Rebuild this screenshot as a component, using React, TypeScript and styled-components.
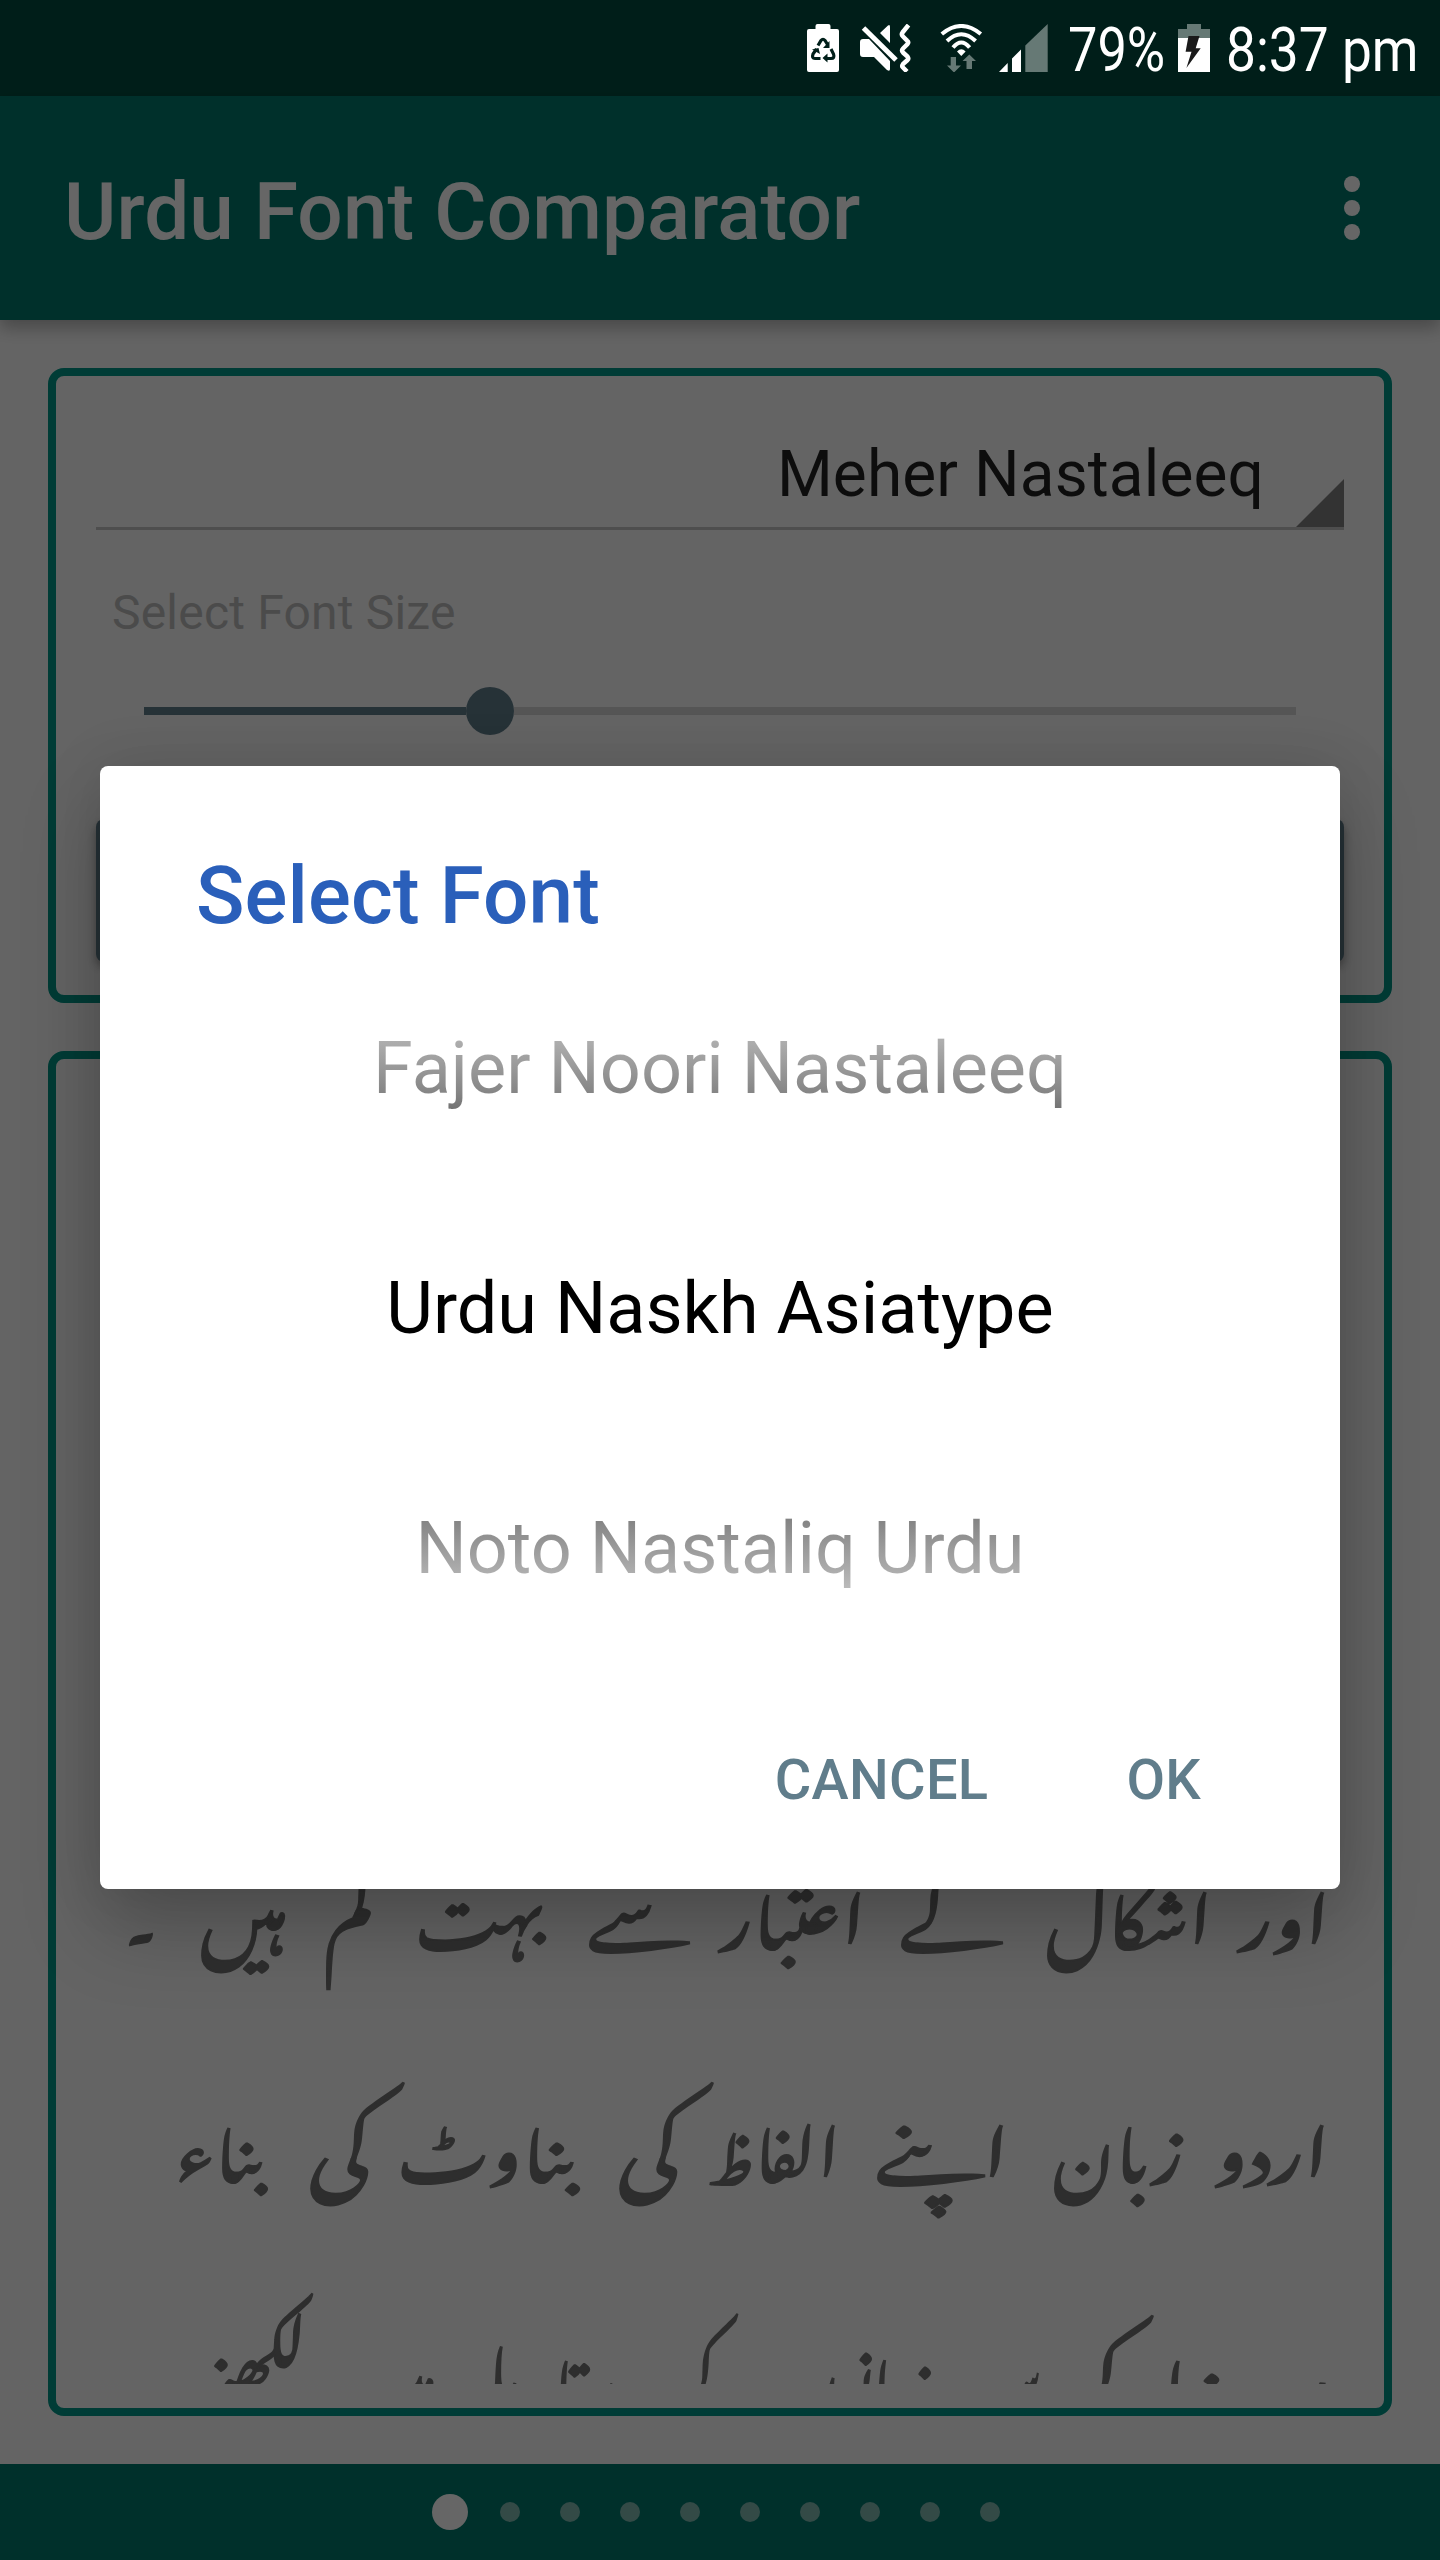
import React, { useLayoutEffect, useRef, useState } from "react";
import styled, { createGlobalStyle } from "styled-components";

const GlobalStyle = createGlobalStyle`
  * { box-sizing: border-box; }
  body { margin: 0; background: #fafafa; font-family: Roboto, "Liberation Sans", sans-serif; }
  button { font-family: inherit; border: 0; background: none; padding: 0; }
  svg { display: block; flex: none; }
`;

const Screen = styled.div`
  position: relative;
  width: 1440px;
  height: 2560px;
  overflow: hidden;
`;

const Page = styled.div`
  display: flex;
  flex-direction: column;
  height: 100%;
  background: #fafafa;
`;

const StatusBackdrop = styled.div`
  flex: none;
  height: 96px;
  background: #004d40;
`;

const AppBar = styled.header`
  flex: none;
  display: flex;
  align-items: center;
  justify-content: space-between;
  height: 224px;
  padding: 0 80px 0 64px;
  background: #00796b;
  box-shadow: 0 8px 16px rgba(0, 0, 0, 0.28);
`;

const AppTitle = styled.h1`
  margin: 0;
  padding-top: 7px;
  font-size: 80px;
  font-weight: 500;
  line-height: 96px;
  letter-spacing: 0.13px;
  color: #fff;
`;

const MenuDots = styled.button`
  display: flex;
  flex-direction: column;
  gap: 8px;
`;

const MenuDot = styled.span`
  width: 16px;
  height: 16px;
  border-radius: 50%;
  background: #fff;
`;

const Content = styled.main`
  flex: 1;
  min-height: 0;
  display: flex;
  flex-direction: column;
  gap: 48px;
  padding: 48px;
`;

const Card = styled.section<{ $grow?: boolean }>`
  display: flex;
  flex-direction: column;
  flex: ${(p) => (p.$grow ? "1" : "0 0 635px")};
  min-height: 0;
  padding: ${(p) => (p.$grow ? "0 54px 24px" : "0 40px")};
  border: 8px solid #009688;
  border-radius: 16px;
`;

const Spinner = styled.div`
  display: flex;
  justify-content: flex-end;
  align-items: flex-end;
  height: 154px;
  border-bottom: 3px solid #c4c4c4;
`;

const SpinnerValue = styled.span`
  margin: 0 32px 14px 0;
  font-size: 64px;
  line-height: 76px;
  letter-spacing: 0.1px;
  color: rgba(0, 0, 0, 0.87);
`;

const SpinnerCorner = styled.i`
  width: 48px;
  height: 48px;
  background: #808080;
  clip-path: polygon(100% 0, 100% 100%, 0 100%);
`;

const SizeLabel = styled.label`
  margin: 51px 0 0 16px;
  font-size: 48px;
  line-height: 64px;
  letter-spacing: 0.2px;
  color: #bcbcbc;
`;

const Slider = styled.div`
  display: flex;
  align-items: center;
  height: 48px;
  margin: 42px 48px 0;
`;

const Track = styled.div<{ $active?: boolean }>`
  flex: ${(p) => (p.$active ? "0 0 322px" : "1")};
  height: 8px;
  background: ${(p) => (p.$active ? "#607d8b" : "#d5d5d5")};
`;

const Thumb = styled.div`
  width: 48px;
  height: 48px;
  border-radius: 50%;
  background: #607d8b;
`;

const ApplyButton = styled.button`
  height: 143px;
  margin-top: 84px;
  border-radius: 8px;
  background: #607d8b;
  box-shadow: 0 5px 10px rgba(0, 0, 0, 0.35);
`;

const Viewport = styled.div`
  flex: 1;
  min-height: 0;
  padding-top: 731px;
  overflow: hidden;
`;

const Line = styled.p`
  display: flex;
  direction: rtl;
  height: 233px;
  margin: 0;
  font-family: "Noto Nastaliq Urdu", "DejaVu Sans", sans-serif;
  font-size: 66px;
  line-height: 233px;
  color: #737373;
  -webkit-text-stroke: 1.8px #737373;
`;

const Slot = styled.span<{ $width: number; $before: number }>`
  flex: none;
  width: ${(p) => p.$width}px;
  margin-inline-start: ${(p) => p.$before}px;
  white-space: nowrap;
`;

const Stretch = styled.span<{ $rtl: boolean }>`
  display: inline-block;
  transform-origin: ${(p) => (p.$rtl ? "100% 50%" : "0 50%")};
`;

const Footer = styled.footer`
  flex: none;
  display: flex;
  align-items: center;
  gap: 40px;
  height: 96px;
  padding-left: 432px;
  background: #00796b;
`;

const PageDot = styled.i<{ $current: boolean }>`
  width: ${(p) => (p.$current ? 36 : 20)}px;
  height: ${(p) => (p.$current ? 36 : 20)}px;
  margin-right: ${(p) => (p.$current ? -8 : 0)}px;
  border-radius: 50%;
  background: ${(p) => (p.$current ? "#fff" : "#80b8b0")};
`;

const Scrim = styled.div`
  position: absolute;
  inset: 0;
  display: flex;
  flex-direction: column;
  background: rgba(0, 0, 0, 0.6);
`;

const StatusBar = styled.div`
  flex: none;
  display: flex;
  align-items: center;
  height: 96px;
  padding-left: 807px;
  color: #fff;
`;

const StatusItem = styled.span<{ $before: number }>`
  margin-left: ${(p) => p.$before}px;
`;

const StatusText = styled.span`
  display: flex;
  padding-top: 4px;
  font-size: 61px;
  line-height: 72px;
`;

const Dialog = styled.section`
  display: flex;
  flex-direction: column;
  width: 1240px;
  height: 1123px;
  margin: 670px auto 0;
  border-radius: 8px;
  background: #fff;
  box-shadow: 0 40px 80px rgba(0, 0, 0, 0.22), 0 0 60px rgba(0, 0, 0, 0.1);
`;

const DialogTitle = styled.h2`
  margin: 82px 96px 0;
  font-size: 80px;
  font-weight: 500;
  line-height: 96px;
  letter-spacing: 0.13px;
  color: #2a5fba;
`;

const Picker = styled.ul`
  margin: 5px 0 0;
  padding: 0;
  list-style: none;
  text-align: center;
`;

const fades = {
  top: "linear-gradient(#aeaeae 92px, #858585 144px, #747474 159px)",
  none: "linear-gradient(#000, #000)",
  bottom: "linear-gradient(#7a7a7a 84px, #858585 92px, #aeaeae 144px, #bababa 159px)",
};

const Option = styled.li<{ $fade: keyof typeof fades }>`
  height: 240px;
  font-size: 72px;
  line-height: 240px;
  color: transparent;
  background: ${(p) => fades[p.$fade]};
  background-clip: text;
  -webkit-background-clip: text;
`;

const Actions = styled.div`
  display: flex;
  justify-content: flex-end;
  gap: 138px;
  margin-top: 77px;
  padding-right: 139px;
`;

const Action = styled.button`
  font-size: 56px;
  font-weight: 500;
  line-height: 68px;
  letter-spacing: 0.3px;
  color: #607d8b;
`;

/** Squeezes or widens its text so that it takes exactly the given width. */
function Fit({ text, width, before = 0, rtl = false }: { text: string; width: number; before?: number; rtl?: boolean }) {
  const ref = useRef<HTMLSpanElement>(null);
  const [scale, setScale] = useState(1);
  useLayoutEffect(() => {
    if (ref.current) setScale(width / ref.current.offsetWidth);
  }, [text, width]);
  return (
    <Slot $width={width} $before={before}>
      <Stretch ref={ref} $rtl={rtl} style={{ transform: `scaleX(${scale})` }}>
        {text}
      </Stretch>
    </Slot>
  );
}

type Word = [text: string, left: number, right: number];

const TEXT_RIGHT = 1330;

const lines: Word[][] = [
  [["اور", 1241, 1330], ["اشکال", 1046, 1213], ["کے", 900, 1003], ["اعتبار", 722, 866], ["سے", 588, 690], ["بہت", 416, 545], ["کم", 325, 373], ["ہیں", 200, 286], ["۔", 127, 155]],
  [["اردو", 1214, 1330], ["زبان", 1053, 1183], ["اپنے", 876, 1010], ["الفاظ", 709, 841], ["کی", 618, 680], ["بناوٹ", 398, 575], ["کی", 309, 371], ["بناء", 176, 263]],
  [["پر", 1270, 1330], ["دنیا", 1162, 1244], ["کی", 1058, 1120], ["سب", 975, 1040], ["زبانوں", 786, 931], ["کے", 679, 759], ["مقابلے", 468, 620], ["میں", 358, 436], ["لکھنے", 198, 308]],
];

function UrduLine({ words }: { words: Word[] }) {
  return (
    <Line>
      {words.map(([text, left, right], i) => (
        <Fit key={i} rtl text={text} width={right - left} before={(i ? words[i - 1][1] : TEXT_RIGHT) - right} />
      ))}
    </Line>
  );
}

const BatterySaverIcon = () => (
  <svg width="32" height="48" viewBox="0 0 32 48">
    <path d="M8.5 5V2q0-2 2-2h11q2 0 2 2v3H30q2 0 2 2v39q0 2-2 2H2q-2 0-2-2V7q0-2 2-2z" fill="#fff" />
    <g fill="none" stroke="#001f1a" strokeWidth="3.2">
      <path d="M11 21.500L14 16.500Q16 14 18 16.500L20.500 20.500" />
      <path d="M24 25L26.500 30Q28 34.500 24 34.500H19" />
      <path d="M13.500 34.500H8Q4.500 34.500 6 30L9.500 25" />
    </g>
    <path d="M22.500 17v7h-6.500zM20.500 29.500v9l-5-4.500zM5 25.500l6.500-1.500 1.500 6z" fill="#001f1a" />
  </svg>
);

const MuteVibrateIcon = () => (
  <svg width="52" height="48" viewBox="0 0 52 48">
    <path d="M3 15H9L30 37V45Q30 48 27 46L14 33H3Q0 33 0 30V18Q0 15 3 15zM20 9L28 1.500Q30 0 30 3V19z" fill="#fff" />
    <path d="M3.500 4L36 36" stroke="#fff" strokeWidth="5" />
    <path d="M48.500 1L42.500 8.500Q41 10.500 43 12.500L47 16.500Q49 18 47.500 20L43 24.500Q41 26.500 43 28.500L47.500 32.500Q49 34.500 47.500 36L43 40Q41.500 42 43 43.500L47 47.500" fill="none" stroke="#fff" strokeWidth="4.500" />
  </svg>
);

const WifiIcon = () => (
  <svg width="43" height="48" viewBox="0 0 43 48">
    <g fill="none" stroke="#fff" strokeWidth="4">
      <path d="M1.800 10Q21.300-6 40.800 10" />
      <path d="M7 17Q21.300 3.500 35.600 17" />
      <path d="M13 23.500Q21.300 13.500 29.600 23.500" />
    </g>
    <path d="M17 27.500Q21.300 23 25.600 27.500L21.300 32z" fill="#fff" />
    <path d="M10.700 33H16v8.500h5L14 48.500 7 41.500h3.700zM26.500 45V37h-4L29.300 30.500 36 37h-4v8z" fill="#667975" />
  </svg>
);

const SignalIcon = () => (
  <svg width="49" height="48" viewBox="0 0 49 48">
    <path d="M0 48L8.700 39V48zM13 48V34.500L22 25.500V48z" fill="#fff" />
    <path d="M26.300 48V21.500L48.700 0V48z" fill="#667975" />
  </svg>
);

const ChargingIcon = () => (
  <svg width="32" height="48" viewBox="0 0 32 48">
    <path d="M9 0H23V5H32V14H0V5H9z" fill="#667975" />
    <path d="M0 14H32V48H0z" fill="#fff" />
    <path d="M10.500 12H21.500L17.700 24.300H22.700L8.400 44 13.500 27.700H7.600z" fill="#1a1a1a" />
  </svg>
);

export default function App() {
  return (
    <Screen>
      <GlobalStyle />
      <Page>
        <StatusBackdrop />
        <AppBar>
          <AppTitle>Urdu Font Comparator</AppTitle>
          <MenuDots aria-label="More options">
            <MenuDot />
            <MenuDot />
            <MenuDot />
          </MenuDots>
        </AppBar>
        <Content>
          <Card>
            <Spinner>
              <SpinnerValue>Meher Nastaleeq</SpinnerValue>
              <SpinnerCorner />
            </Spinner>
            <SizeLabel>Select Font Size</SizeLabel>
            <Slider>
              <Track $active />
              <Thumb />
              <Track />
            </Slider>
            <ApplyButton />
          </Card>
          <Card $grow>
            <Viewport>
              {lines.map((words, i) => (
                <UrduLine key={i} words={words} />
              ))}
            </Viewport>
          </Card>
        </Content>
        <Footer>
          {Array.from({ length: 10 }, (_, i) => (
            <PageDot key={i} $current={i === 0} />
          ))}
        </Footer>
      </Page>
      <Scrim>
        <StatusBar>
          <BatterySaverIcon />
          <StatusItem $before={21}><MuteVibrateIcon /></StatusItem>
          <StatusItem $before={28}><WifiIcon /></StatusItem>
          <StatusItem $before={16}><SignalIcon /></StatusItem>
          <StatusText><Fit text="79%" width={97} before={20} /></StatusText>
          <StatusItem $before={13}><ChargingIcon /></StatusItem>
          <StatusText><Fit text="8:37 pm" width={193} before={16} /></StatusText>
        </StatusBar>
        <Dialog role="dialog">
          <DialogTitle>Select Font</DialogTitle>
          <Picker>
            <Option $fade="top">Fajer Noori Nastaleeq</Option>
            <Option $fade="none">Urdu Naskh Asiatype</Option>
            <Option $fade="bottom">Noto Nastaliq Urdu</Option>
          </Picker>
          <Actions>
            <Action>CANCEL</Action>
            <Action>OK</Action>
          </Actions>
        </Dialog>
      </Scrim>
    </Screen>
  );
}
